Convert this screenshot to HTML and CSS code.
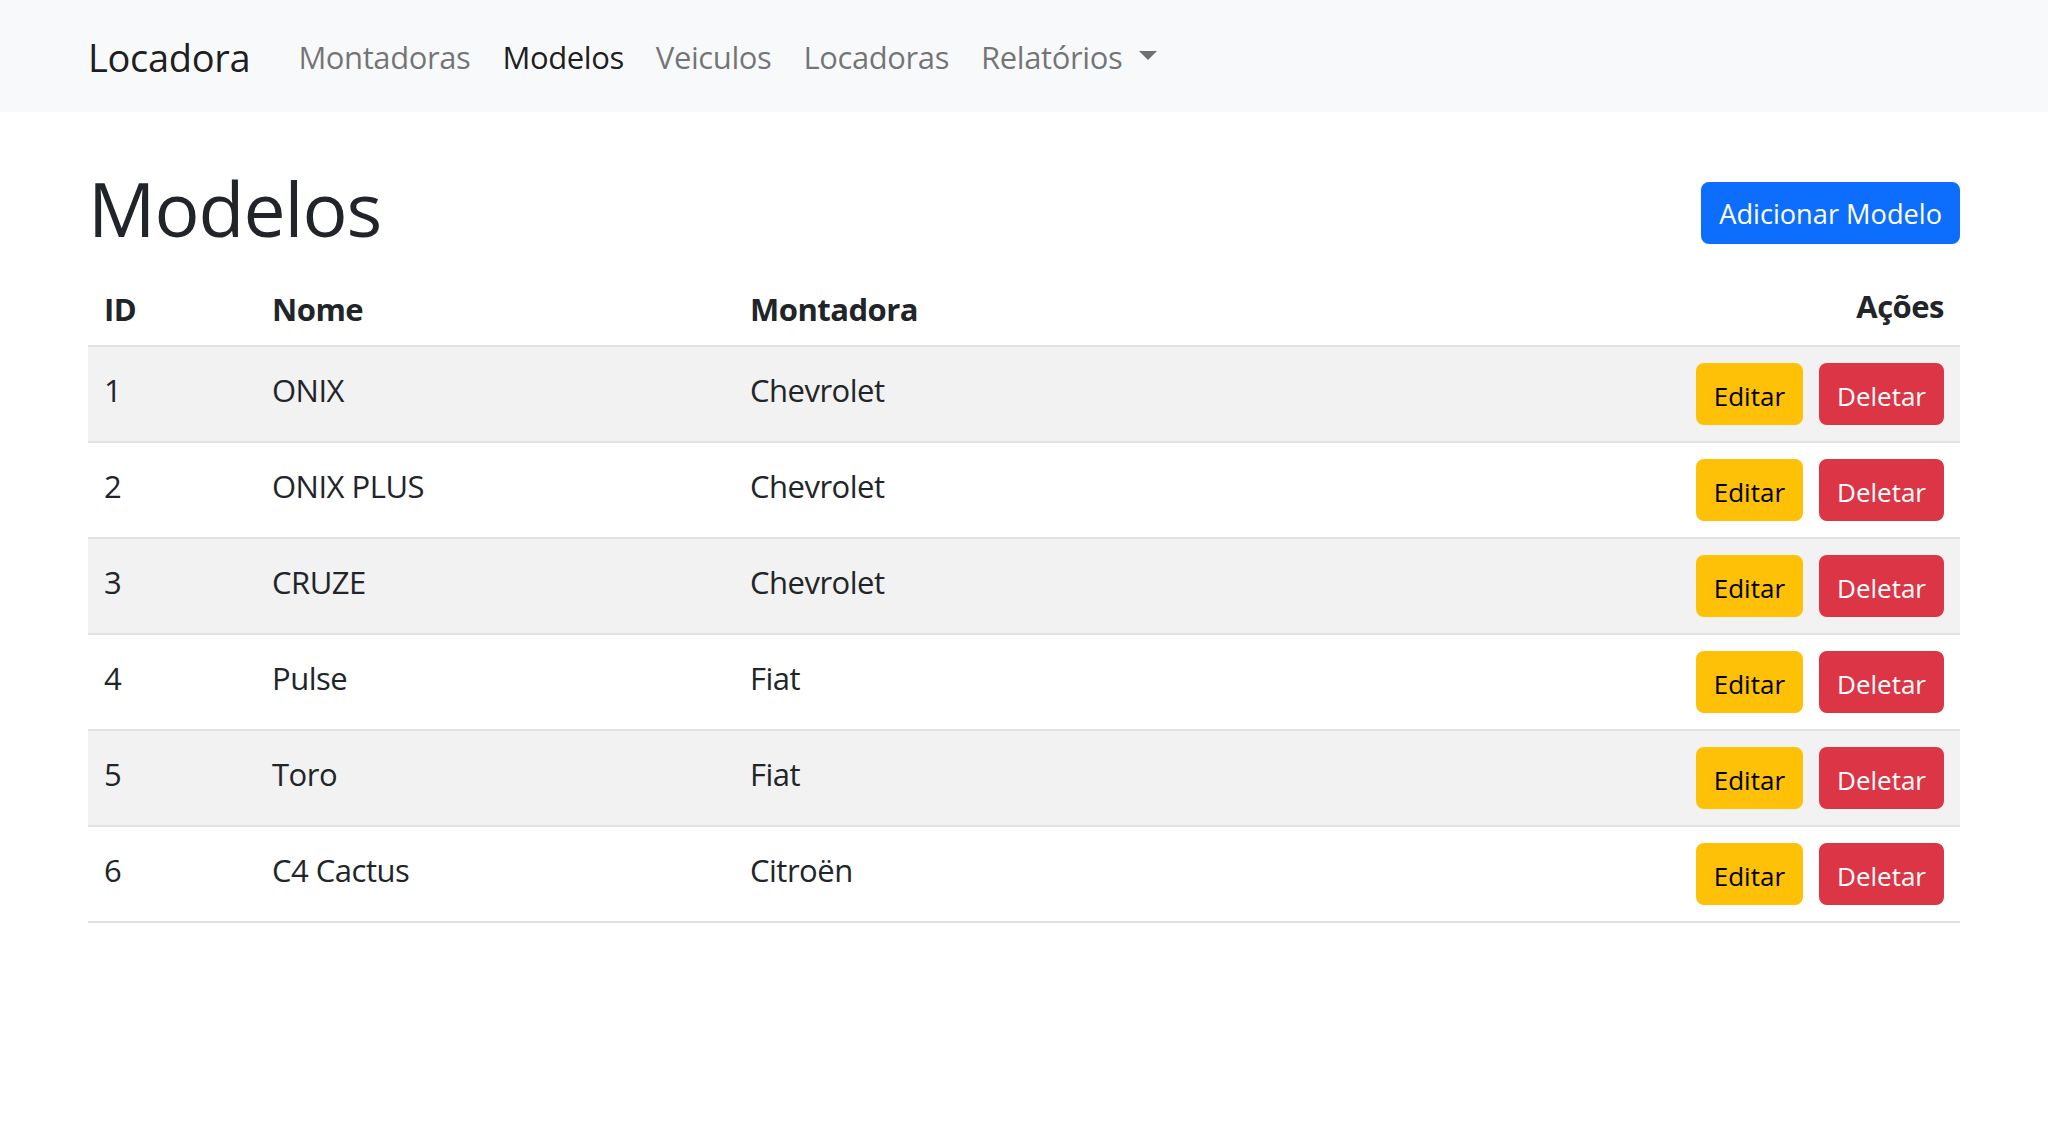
FILE: index.html
```html
<!DOCTYPE html>
<html lang="pt-BR">
<head>
<meta charset="utf-8">
<title>Modelos - Locadora</title>
<link rel="stylesheet" href="styles.css">
</head>
<body>
<nav class="navbar">
  <div class="nav-inner">
    <a class="brand" href="#">Locadora</a>
    <ul class="nav-links">
      <li><a class="nav-link" href="#">Montadoras</a></li>
      <li><a class="nav-link active" href="#">Modelos</a></li>
      <li><a class="nav-link" href="#">Veiculos</a></li>
      <li><a class="nav-link" href="#">Locadoras</a></li>
      <li><a class="nav-link" href="#">Relatórios<span class="caret"></span></a></li>
    </ul>
  </div>
</nav>
<main class="container">
  <div class="title-row">
    <h1 class="page-title">Modelos</h1>
    <a class="btn btn-primary btn-add" href="#">Adicionar Modelo</a>
  </div>
  <table class="data-table">
    <colgroup>
      <col class="col-id">
      <col class="col-nome">
      <col class="col-montadora">
      <col class="col-acoes">
    </colgroup>
    <thead>
      <tr>
        <th>ID</th>
        <th>Nome</th>
        <th>Montadora</th>
        <th class="th-actions">Ações</th>
      </tr>
    </thead>
    <tbody>
      <tr class="striped">
        <td>1</td><td>ONIX</td><td>Chevrolet</td>
        <td class="cell-actions"><div class="actions"><a class="btn btn-warning" href="#">Editar</a><a class="btn btn-danger" href="#">Deletar</a></div></td>
      </tr>
      <tr>
        <td>2</td><td>ONIX PLUS</td><td>Chevrolet</td>
        <td class="cell-actions"><div class="actions"><a class="btn btn-warning" href="#">Editar</a><a class="btn btn-danger" href="#">Deletar</a></div></td>
      </tr>
      <tr class="striped">
        <td>3</td><td>CRUZE</td><td>Chevrolet</td>
        <td class="cell-actions"><div class="actions"><a class="btn btn-warning" href="#">Editar</a><a class="btn btn-danger" href="#">Deletar</a></div></td>
      </tr>
      <tr>
        <td>4</td><td>Pulse</td><td>Fiat</td>
        <td class="cell-actions"><div class="actions"><a class="btn btn-warning" href="#">Editar</a><a class="btn btn-danger" href="#">Deletar</a></div></td>
      </tr>
      <tr class="striped">
        <td>5</td><td>Toro</td><td>Fiat</td>
        <td class="cell-actions"><div class="actions"><a class="btn btn-warning" href="#">Editar</a><a class="btn btn-danger" href="#">Deletar</a></div></td>
      </tr>
      <tr>
        <td>6</td><td>C4 Cactus</td><td>Citroën</td>
        <td class="cell-actions"><div class="actions"><a class="btn btn-warning" href="#">Editar</a><a class="btn btn-danger" href="#">Deletar</a></div></td>
      </tr>
    </tbody>
  </table>
</main>
</body>
</html>
```
FILE: styles.css
```css
* { box-sizing: border-box; }

html, body {
  margin: 0;
  padding: 0;
  background: #ffffff;
}

body {
  font-family: "Open Sans", "Noto Sans", sans-serif;
  color: #212529;
  font-size: 31px;
  letter-spacing: -0.5px;
  line-height: 48px;
}

a { text-decoration: none; }

/* Navbar */
.navbar {
  background: #f8f9fa;
  padding: 16px 0;
  height: 112px;
}

.nav-inner {
  width: 1872px;
  margin: 0 auto;
  display: flex;
  align-items: center;
  height: 80px;
}

.brand {
  font-size: 38px;
  letter-spacing: -0.3px;
  line-height: 60px;
  padding: 11px 0 9px;
  margin-right: 32px;
  color: rgba(0, 0, 0, 0.9);
}

.nav-links {
  display: flex;
  list-style: none;
  margin: 0;
  padding: 0;
}

.nav-link {
  display: block;
  padding: 17px 16px 15px;
  line-height: 48px;
  letter-spacing: -0.4px;
  color: rgba(0, 0, 0, 0.55);
}

.nav-link.active {
  color: rgba(0, 0, 0, 0.9);
}

.caret {
  display: inline-block;
  margin-left: 17px;
  vertical-align: 9.3px;
  width: 0;
  height: 0;
  border-top: 9.3px solid rgba(0, 0, 0, 0.55);
  border-left: 9.3px solid transparent;
  border-right: 9.3px solid transparent;
}

/* Main */
.container {
  width: 1872px;
  margin: 0 auto;
  padding-top: 48px;
}

.title-row {
  display: flex;
  justify-content: space-between;
  align-items: center;
}

.page-title {
  margin: 0 0 9px;
  font-size: 75px;
  letter-spacing: -1px;
  line-height: 96px;
  font-weight: 500;
  color: #212529;
}

/* Buttons */
.btn {
  display: inline-block;
  font-size: 26px;
  letter-spacing: 0;
  line-height: 42px;
  padding: 10px 16px 6px;
  border: 2px solid transparent;
  border-radius: 8px;
  white-space: nowrap;
}

.btn-primary {
  background: #0d6efd;
  border-color: #0d6efd;
  color: #ffffff;
}

.btn-add {
  font-size: 27.2px;
  padding-top: 9px;
  padding-bottom: 7px;
}

.btn-warning {
  background: #ffc107;
  border-color: #ffc107;
  color: #000000;
}

.btn-danger {
  background: #dc3545;
  border-color: #dc3545;
  color: #ffffff;
}

/* Table */
.data-table {
  width: 1872px;
  table-layout: fixed;
  border-collapse: collapse;
}

.col-id { width: 168px; }
.col-nome { width: 478px; }
.col-montadora { width: 511px; }
.col-acoes { width: 715px; }

.data-table th,
.data-table td {
  border-bottom: 2px solid #dee2e6;
  text-align: left;
  vertical-align: top;
}

.data-table th {
  font-weight: 700;
  padding: 20px 16px 12px;
}

.data-table th.th-actions {
  text-align: right;
  padding-top: 17px;
  padding-bottom: 15px;
}

.data-table td {
  padding: 19px 16px 13px;
}

.data-table tr.striped td {
  background: #f2f2f2;
}

.data-table td.cell-actions {
  padding: 16px;
}

.actions {
  display: flex;
  justify-content: flex-end;
  gap: 16px;
}
```
